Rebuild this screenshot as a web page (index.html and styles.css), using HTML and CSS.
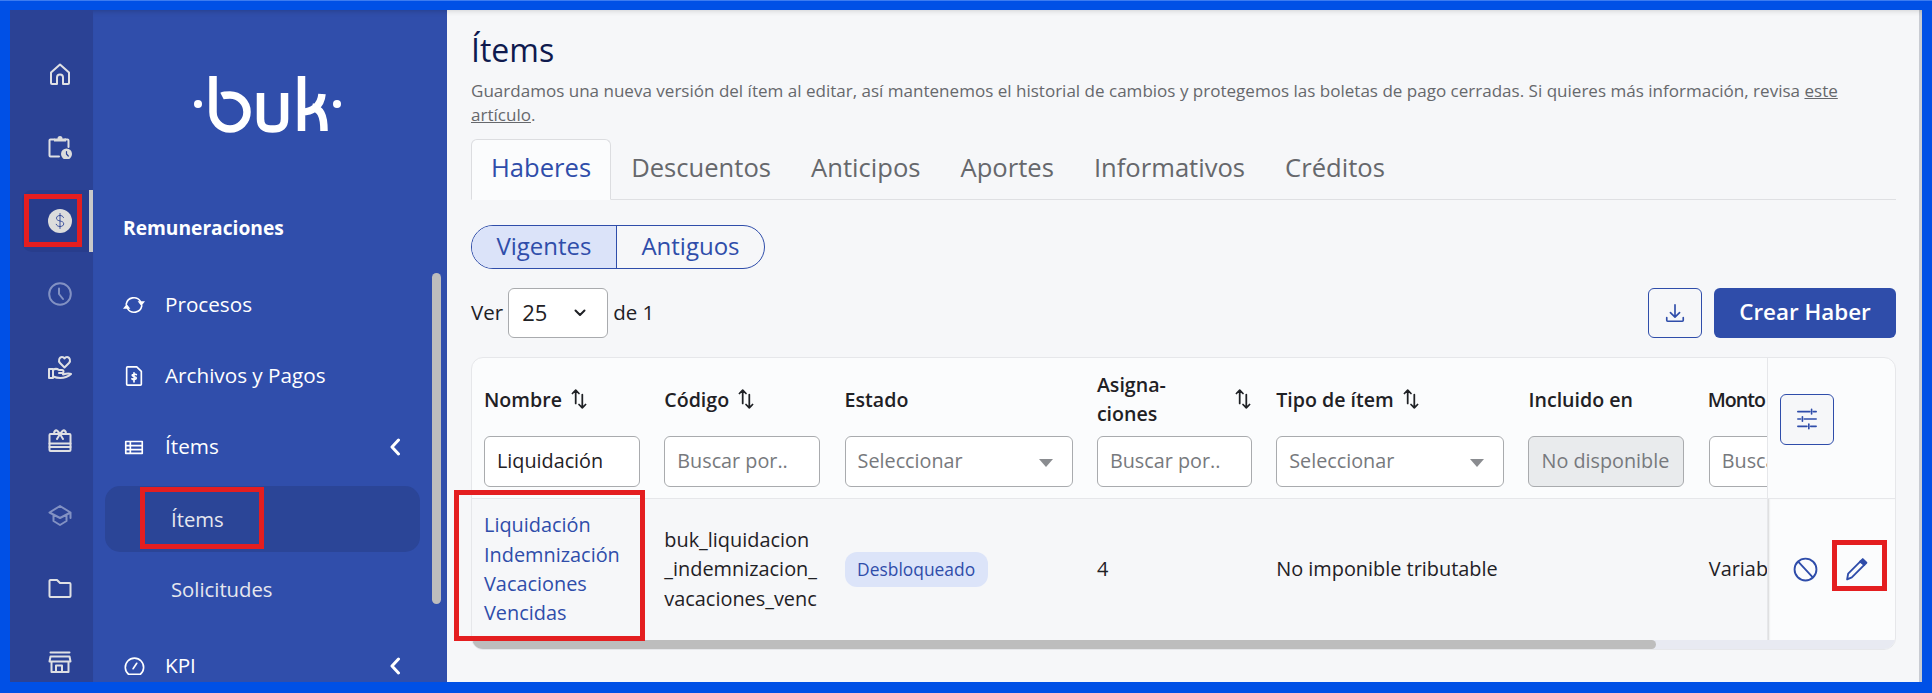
FILE: index.html
```html
<!DOCTYPE html>
<html lang="es">
<head>
  <meta charset="UTF-8" />
  <title>Ítems</title>
  <link rel="stylesheet" href="styles.css">
</head>
<body>
  <div class="frame">
    <aside class="rail">
      <div class="rail-item">
        <svg viewBox="0 0 24 24"><path d="M3 10.500 12 2.500l9 8V21a1 1 0 0 1-1 1h-5v-6.500a3 3 0 0 0-6 0V22H4a1 1 0 0 1-1-1z"/></svg>
      </div>
      <div class="rail-item">
        <svg viewBox="0 0 24 24"><path d="M11 21.500H2.500a1 1 0 0 1-1-1V5.500a1 1 0 0 1 1-1H6M17 4.500h2.500a1 1 0 0 1 1 1V12"/><path d="M6 3.500h3.500a2.500 2.500 0 0 1 5 0H18v3H6z" class="solid"/><circle cx="18.500" cy="19" r="5.500" class="solid"/><path d="M18.500 16.500V19l1.800 2" class="dark"/></svg>
      </div>
      <div class="rail-item active">
        <svg viewBox="0 0 24 24"><circle cx="12" cy="12" r="12" class="solid"/><path d="M15.500 8.500c-.6-1.400-1.900-2-3.500-2-2 0-3.500 1-3.500 2.700 0 3.700 7.200 1.900 7.200 5.600 0 1.700-1.600 2.700-3.700 2.700-1.700 0-3.200-.7-3.800-2.200M12 4.500v15" class="dark thin"/></svg>
        <span class="mark mark-rail"></span>
      </div>
      <div class="rail-item dim">
        <svg viewBox="0 0 24 24"><circle cx="12" cy="12" r="10.800"/><path d="M11 6.500V12l4 5"/></svg>
      </div>
      <div class="rail-item">
        <svg viewBox="0 0 24 24"><path d="M16.500 11.500 12 7c-2-2-.8-6 2-6 1.300 0 2 .6 2.500 1.500C17 1.600 17.800 1 19 1c2.800 0 4 4 2 6z"/><path d="M1 13h4v9H1zM5 14c2-1.500 4-1.500 6 0h3a1.500 1.500 0 0 1 0 3h-3M5 20.500c5 2 9 2 13 .5 2.500-1 4-2 5-3-2-1-5-.5-8 .5"/></svg>
      </div>
      <div class="rail-item">
        <svg viewBox="0 0 24 24"><path d="M8 5H2.500a1 1 0 0 0-1 1v15a1 1 0 0 0 1 1h19a1 1 0 0 0 1-1V6a1 1 0 0 0-1-1H16"/><path d="M1.500 14.500h21M1.500 18h21" /><path d="M12 5 9.500 2A1.800 1.800 0 0 0 7 5h10a1.800 1.800 0 0 0-2.500-3zM12 5l-3 5M12 5l3 5"/></svg>
      </div>
      <div class="rail-item dim">
        <svg viewBox="0 0 24 24"><path d="M12 3 1.500 9.500 12 15l10.500-5.500zM5.500 12.500v5.500L12 22l6.500-4v-5.500M22.500 9.500V15"/></svg>
      </div>
      <div class="rail-item">
        <svg viewBox="0 0 24 24"><path d="M1.500 5a1 1 0 0 1 1-1H9l3 3h9.500a1 1 0 0 1 1 1v12a1 1 0 0 1-1 1h-19a1 1 0 0 1-1-1z"/></svg>
      </div>
      <div class="rail-item">
        <svg viewBox="0 0 24 24"><path d="M2.500 2.500h19M2.500 6.500h19l1 5H1.500zM3.500 11.500V22h17V11.500M8 22v-6.500h6V22"/></svg>
      </div>
    </aside>

    <nav class="side">
      <div class="logo">
        <svg viewBox="0 0 147 58" width="147" height="58"><circle cx="4" cy="28" r="4" class="fill"/><circle cx="143" cy="28" r="4" class="fill"/><path d="M19 0v36a17 17 0 1 0 17-17c-4 0-6 0-8 1M66.500 17v26c0 8 4 10 12 10s12-2 12-10V17M107.500 0v55M108 36c9 0 19-5 20-18M118 31c8 2 12 7 12 24"/></svg>
      </div>
      <div class="side-title">Remuneraciones</div>
      <div class="side-row">
        <svg class="side-icon" viewBox="0 0 24 24"><path d="M3.500 11A8.500 8.500 0 0 1 19 8M20.500 13A8.500 8.500 0 0 1 5 16"/><path d="M16 8h8l-4 5zM0 16h8l-4-5z" class="fill"/></svg>
        <span>Procesos</span>
      </div>
      <div class="side-row">
        <svg class="side-icon" viewBox="0 0 24 24"><path d="M5 2h10l5 5v14a1 1 0 0 1-1 1H5a1 1 0 0 1-1-1V3a1 1 0 0 1 1-1z"/><path d="M14.500 10.500c-1-1-4.500-1-4.500.8 0 2 4.500 1 4.500 3 0 1.800-3.500 1.800-4.800.7M12 8.500v10"/></svg>
        <span>Archivos y Pagos</span>
      </div>
      <div class="side-row">
        <svg class="side-icon" viewBox="0 0 24 24"><path d="M3 6h18v13H3zM3 10.500h18M3 14.800h18M8 6v13" /></svg>
        <span>Ítems</span>
        <svg class="chevron" viewBox="0 0 12 18"><path d="M9.500 2 3 9l6.500 7"/></svg>
      </div>
      <div class="side-sub current"><span class="sub-label">Ítems<span class="mark mark-sub"></span></span></div>
      <div class="side-sub"><span class="sub-label">Solicitudes</span></div>
      <div class="side-row side-kpi">
        <svg class="side-icon" viewBox="0 0 24 24"><path d="M6 21a10 10 0 1 1 13 0zM11 15l4-6"/></svg>
        <span>KPI</span>
        <svg class="chevron" viewBox="0 0 12 18"><path d="M9.500 2 3 9l6.500 7"/></svg>
      </div>
      <div class="side-scroll"></div>
    </nav>

    <main class="main">
      <h1 class="title">Ítems</h1>
      <p class="intro">Guardamos una nueva versión del ítem al editar, así mantenemos el historial de cambios y protegemos las boletas de pago cerradas. Si quieres más información, revisa <a href="#">este</a> <a href="#">artículo</a>.</p>

      <div class="tabs">
        <a class="tab selected">Haberes</a>
        <a class="tab">Descuentos</a>
        <a class="tab">Anticipos</a>
        <a class="tab">Aportes</a>
        <a class="tab">Informativos</a>
        <a class="tab">Créditos</a>
      </div>

      <div class="switch">
        <span class="switch-opt on">Vigentes</span>
        <span class="switch-opt">Antiguos</span>
      </div>

      <div class="controls">
        <span>Ver</span>
        <span class="page-select">25
          <svg viewBox="0 0 12 8"><path d="M1.500 1.500 6 6l4.500-4.500"/></svg>
        </span>
        <span>de 1</span>
        <button class="btn-icon" type="button">
          <svg viewBox="0 0 24 24"><path d="M12 3v13M7 11.500l5 5 5-5M3 17v3a1 1 0 0 0 1 1h16a1 1 0 0 0 1-1v-3"/></svg>
        </button>
        <button class="btn-main" type="button">Crear Haber</button>
      </div>

      <section class="card">
        <div class="card-body">
          <div class="scroller">
            <div class="grid head">
              <div class="th">Nombre <svg class="sort" viewBox="0 0 16 20"><path d="M5 14V2M2 5l3-3 3 3M11 6v12M8 15l3 3 3-3"/></svg></div>
              <div class="th">Código <svg class="sort" viewBox="0 0 16 20"><path d="M5 14V2M2 5l3-3 3 3M11 6v12M8 15l3 3 3-3"/></svg></div>
              <div class="th">Estado</div>
              <div class="th th-split">Asigna-<br>ciones <svg class="sort" viewBox="0 0 16 20"><path d="M5 14V2M2 5l3-3 3 3M11 6v12M8 15l3 3 3-3"/></svg></div>
              <div class="th">Tipo de ítem <svg class="sort" viewBox="0 0 16 20"><path d="M5 14V2M2 5l3-3 3 3M11 6v12M8 15l3 3 3-3"/></svg></div>
              <div class="th">Incluido en</div>
              <div class="th th-tight">Monto</div>

              <div class="field value">Liquidación</div>
              <div class="field">Buscar por..</div>
              <div class="field pick">Seleccionar<i class="caret"></i></div>
              <div class="field">Buscar por..</div>
              <div class="field pick">Seleccionar<i class="caret"></i></div>
              <div class="field off">No disponible</div>
              <div class="field">Buscar por..</div>
            </div>
            <div class="grid row">
              <div class="td name">Liquidación Indemnización Vacaciones Vencidas</div>
              <div class="td code">buk_liquidacion<br>_indemnizacion_<br>vacaciones_venc</div>
              <div class="td"><span class="badge">Desbloqueado</span></div>
              <div class="td">4</div>
              <div class="td">No imponible tributable</div>
              <div class="td"></div>
              <div class="td">Variable</div>
            </div>
          </div>
          <div class="actions">
            <div class="actions-head">
              <button class="btn-icon btn-cols" type="button">
                <svg viewBox="0 0 24 24"><path d="M2 4h13M19 4h3M17 1.500v5M2 12h3M9 12h13M7 9.500v5M2 20h10M16 20h6M14 17.500v5"/></svg>
              </button>
            </div>
            <div class="actions-row">
              <svg class="act" viewBox="0 0 24 24"><circle cx="12" cy="12" r="10.500"/><path d="M5 4.500l14 15"/></svg>
              <span class="act-edit">
                <svg class="act" viewBox="0 0 24 24"><path d="M3 21.500l1-5.500L16 4l3.500 3.500-12 12z"/><path d="M15.500 4.500 18 2l3.500 3.500-2 2z" class="blue"/></svg>
                <span class="mark mark-edit"></span>
              </span>
            </div>
          </div>
        </div>
        <div class="hbar"><div class="hbar-thumb"></div></div>
      </section>
      <span class="mark mark-name"></span>
    </main>
  </div>
</body>
</html>
```

FILE: styles.css
```css
:root {
  --edge: #0050e6;
  --rail: #2b4295;
  --panel: #304eab;
  --panel-dark: #2b4597;
  --blue: #2f4daa;
  --bg: #f6f7f9;
  --line: #e6e7ea;
  --field-line: #a9abae;
  --red: #e41e20;
  --text: #1f2125;
  --muted: #66686c;
}
* { box-sizing: border-box; }
html, body {
  height: 100%;
  margin: 0;
  padding: 0;
}
body {
  background: var(--edge);
  font-family: "Open Sans", "Noto Sans", Arial, sans-serif;
  color: var(--text);
  overflow: hidden;
}
.frame {
  display: flex;
  height: 693px;
  padding: 9px 10px 11px 10px;
  border-top: 1px solid #3d7cf0;
  overflow: hidden;
}
svg { display: block; fill: none; stroke: currentColor; stroke-width: 2; stroke-linecap: round; stroke-linejoin: round; }

/* icon rail */
.rail {
  width: 83px;
  flex: none;
  background: var(--rail);
  padding-top: 27px;
  color: #dfe0e4;
}
.rail-item {
  position: relative;
  height: 73.5px;
  display: flex;
  align-items: center;
  justify-content: center;
  padding-left: 17px;
}
.rail-item svg { width: 24px; height: 24px; position: relative; }
.rail-item .solid { fill: #dcdcdc; stroke: none; }
.rail-item .dark { stroke: var(--rail); stroke-width: 1.2; }
.rail-item .dark.thin { stroke-width: .9; }
.rail-item.dim { color: #8291c3; }
.rail-item.active::before {
  content: "";
  position: absolute;
  top: 6px;
  bottom: 6px;
  left: 12px;
  right: 0;
  background: #283d8c;
  border-radius: 10px 0 0 10px;
  border-right: 4px solid #c9c9c9;
}
.mark {
  position: absolute;
  border: 5px solid var(--red);
  pointer-events: none;
}
.mark-rail { left: 14px; top: 10px; width: 58px; height: 53px; }

/* menu panel */
.side {
  position: relative;
  width: 354px;
  flex: none;
  background: var(--panel);
  color: #fff;
  box-shadow: inset 0 6px 6px -6px rgba(0,0,0,.25);
}
.logo {
  display: flex;
  justify-content: center;
  padding: 66px 6px 0 0;
  height: 124px;
}
.logo svg { stroke-width: 7.5; stroke-linecap: butt; stroke-linejoin: miter; }
.logo .fill { fill: #fff; stroke: none; }
.side-title {
  margin: 82px 0 29px 30px;
  font-size: 19.200px;
  line-height: 24px;
  font-weight: 700;
}
.side-row {
  display: flex;
  align-items: center;
  height: 71px;
  padding: 0 46px 0 30px;
  font-size: 20.700px;
}
.side-row span { flex: 1; margin-left: 20px; padding-bottom: 2px; }
.side-icon { width: 22px; height: 22px; flex: none; stroke-width: 1.800; }
.side-icon .fill { fill: #fff; stroke: none; }
.chevron { width: 12px; height: 18px; stroke-width: 3; }
.side-sub {
  display: flex;
  align-items: center;
  height: 66px;
  margin: 4px 27px 0 12px;
  padding-left: 66px;
  border-radius: 15px;
  font-size: 20.300px;
  color: #e6e7ee;
}
.side-sub.current { background: var(--panel-dark); }
.sub-label { position: relative; }
.mark-sub { left: -31px; top: -18px; width: 124px; height: 62px; }
.side-kpi { margin-top: 8px; }
.side-scroll {
  position: absolute;
  top: 263px;
  right: 6px;
  width: 9px;
  height: 331px;
  border-radius: 5px;
  background: #bdbdbd;
}

/* content */
.main {
  position: relative;
  flex: 1;
  min-width: 0;
  background: var(--bg);
  padding: 20px 26px 0 24px;
  box-shadow: inset 0 6px 6px -6px rgba(0,0,0,.2), inset -3px 0 0 #c9ccd3;
}
.title {
  margin: 0;
  font-size: 32px;
  line-height: 40px;
  font-weight: 500;
  color: #0f1a4e;
}
.intro {
  margin: 9px 0 12px;
  font-size: 17.050px;
  line-height: 24px;
  color: var(--muted);
}
.intro a { color: inherit; text-decoration: underline; }
.tabs {
  display: flex;
  height: 61px;
  border-bottom: 1px solid #dfe0e3;
}
.tab {
  padding: 0 19px;
  height: 61px;
  line-height: 56px;
  font-size: 25.600px;
  color: var(--muted);
  border: 1px solid transparent;
}
.tab.selected {
  color: var(--blue);
  background: #fbfcfd;
  border-color: #dcdde0;
  border-bottom-color: #fbfcfd;
  border-radius: 6px 6px 0 0;
}
.switch {
  display: flex;
  width: 294px;
  height: 44px;
  margin-top: 25px;
  border: 1px solid var(--blue);
  border-radius: 22px;
  overflow: hidden;
  font-size: 24px;
  color: var(--blue);
}
.switch-opt {
  flex: 1;
  display: flex;
  align-items: center;
  justify-content: center;
  padding-bottom: 3px;
}
.switch-opt.on {
  flex: none;
  width: 145px;
  background: #dbe3f9;
  border-right: 1px solid var(--blue);
}
.controls {
  display: flex;
  align-items: center;
  height: 50px;
  margin-top: 19px;
  font-size: 20.500px;
  gap: 5px;
}
.controls > span:first-child,
.controls > span:nth-child(3) { padding-bottom: 3px; }
.page-select {
  display: flex;
  align-items: center;
  justify-content: space-between;
  width: 100px;
  height: 50px;
  padding: 0 21px 3px 13px;
  background: #fff;
  border: 1px solid var(--field-line);
  border-radius: 6px;
  font-size: 22px;
}
.page-select svg { width: 12px; height: 8px; stroke-width: 2; margin-top: 3px; }
.btn-icon {
  display: flex;
  align-items: center;
  justify-content: center;
  width: 54px;
  height: 50px;
  margin-left: auto;
  padding: 0;
  background: transparent;
  border: 1px solid var(--blue);
  border-radius: 6px;
  color: var(--blue);
}
.btn-icon svg { width: 22px; height: 22px; stroke-width: 1.800; }
.btn-main {
  width: 182px;
  height: 50px;
  margin-left: 7px;
  padding: 0 0 3px;
  background: var(--blue);
  border: 0;
  border-radius: 6px;
  color: #fff;
  font: 600 22.400px "Open Sans", Arial, sans-serif;
}

/* table */
.card {
  height: 293px;
  margin-top: 19px;
  background: #fbfcfd;
  border: 1px solid var(--line);
  border-radius: 12px;
  overflow: hidden;
  display: flex;
  flex-direction: column;
}
.card-body {
  flex: 1;
  min-height: 0;
  display: flex;
}
.scroller {
  width: 1295px;
  flex: none;
  overflow: hidden;
}
.grid {
  display: grid;
  grid-template-columns: 156px 156px 228px 155px 228px 156px 156px;
  column-gap: 24.300px;
  padding-left: 12px;
  width: 1400px;
}
.head {
  height: 141px;
  border-bottom: 1px solid var(--line);
  grid-template-rows: 78px 51px;
}
.th {
  display: flex;
  align-items: center;
  gap: 8px;
  font-size: 19.600px;
  font-weight: 600;
  line-height: 29px;
  padding-top: 4px;
  white-space: nowrap;
}
.th-split { justify-content: space-between; }
.th-tight { letter-spacing: -1px; margin-left: -1px; }
.sort { width: 18px; height: 22px; stroke-width: 1.600; }
.field {
  position: relative;
  display: flex;
  align-items: center;
  height: 51px;
  padding: 0 12px 2px;
  background: #fff;
  border: 1px solid var(--field-line);
  border-radius: 6px;
  font-size: 19.800px;
  color: #77797d;
  white-space: nowrap;
}
.field.value { color: var(--text); }
.field.off { background: #e9ebed; }
.caret {
  position: absolute;
  right: 19px;
  top: 22px;
  border: 7px solid transparent;
  border-top: 8px solid #8a8c90;
  border-bottom: 0;
}
.row {
  height: 142px;
  background: var(--bg);
  align-items: center;
  padding-bottom: 2px;
}
.td {
  position: relative;
  font-size: 19.900px;
  line-height: 29.300px;
  white-space: nowrap;
}
.td.name {
  white-space: normal;
  color: var(--blue);
  width: 140px;
}
.badge {
  display: inline-block;
  padding: 0 12.500px;
  height: 35px;
  line-height: 34px;
  background: #dce4f9;
  border-radius: 12px;
  font-size: 17.400px;
  color: var(--blue);
}
.mark-name { left: 7px; top: 480px; width: 191px; height: 151px; }
.actions {
  flex: 1;
  min-width: 0;
  border-left: 1px solid var(--line);
}
.actions-head {
  height: 141px;
  display: flex;
  align-items: center;
  padding: 0 0 18px 12px;
  border-bottom: 1px solid var(--line);
}
.btn-cols { margin: 0; height: 51px; background: var(--bg); }
.actions-row {
  height: 142px;
  display: flex;
  align-items: center;
  gap: 26px;
  padding: 0 0 2px 25px;
  color: var(--blue);
  box-shadow: inset 2px 0 2px -1px rgba(0,0,0,.15);
}
.act { width: 25px; height: 25px; stroke-width: 1.800; }
.act .blue { fill: var(--blue); }
.act-edit { position: relative; }
.mark-edit { left: -12px; top: -17px; width: 55px; height: 51px; }
.hbar {
  height: 9px;
  flex: none;
  background: #e8eaf2;
}
.hbar-thumb {
  width: 1184px;
  height: 9px;
  background: #bdbdbd;
  border-radius: 5px;
}
```
